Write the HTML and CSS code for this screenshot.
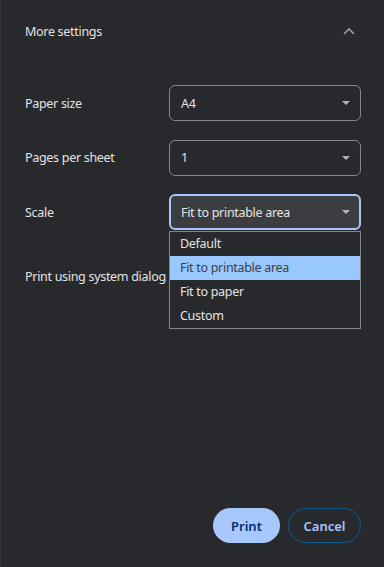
FILE: index.html
```html
<!DOCTYPE html>
<html lang="en">
  <head>
    <meta charset="UTF-8" />
    <meta name="viewport" content="width=device-width, initial-scale=1.0" />
    <title>Print</title>
    <link rel="stylesheet" href="styles.css">
  </head>
  <body>
    <div class="sidebar">
      <div class="section-header">
        <span>More settings</span>
        <svg class="chevron" width="12" height="8" viewBox="0 0 12 8">
          <path d="M1 7 L6 2 L11 7" fill="none" stroke="#9aa0a6" stroke-width="1.6" />
        </svg>
      </div>

      <div class="settings">
        <div class="row">
          <span class="label">Paper size</span>
          <div class="select">
            <span>A4</span>
            <span class="arrow"></span>
          </div>
        </div>
        <div class="row">
          <span class="label">Pages per sheet</span>
          <div class="select">
            <span>1</span>
            <span class="arrow"></span>
          </div>
        </div>
        <div class="row">
          <span class="label">Scale</span>
          <div class="select open">
            <span>Fit to printable area</span>
            <span class="arrow"></span>
            <ul class="options">
              <li>Default</li>
              <li class="selected">Fit to printable area</li>
              <li>Fit to paper</li>
              <li>Custom</li>
            </ul>
          </div>
        </div>
        <div class="row link-row">
          <span class="label clipped">Print using system dialog… (Ctrl+Shift+P)</span>
        </div>
      </div>

      <div class="buttons">
        <button class="btn primary">Print</button>
        <button class="btn outline">Cancel</button>
      </div>
    </div>
  </body>
</html>
```

FILE: styles.css
```css
* {
  margin: 0;
  padding: 0;
  box-sizing: border-box;
}

body {
  background: #28292d;
  color: #e3e3e3;
  font-family: "Noto Sans", "Open Sans", Arial, sans-serif;
  font-size: 12.5px;
  letter-spacing: -0.3px;
}

.sidebar {
  min-height: 100vh;
  border-left: 1px solid #35363a;
  padding: 0 23px 24px 24px;
  display: flex;
  flex-direction: column;
}

.section-header {
  height: 62px;
  display: flex;
  align-items: center;
  justify-content: space-between;
  padding-right: 6px;
}

.settings {
  margin-top: 23px;
  display: flex;
  flex-direction: column;
  gap: 18.5px;
}

.row {
  height: 36px;
  display: flex;
  align-items: center;
  justify-content: space-between;
  white-space: nowrap;
}

.link-row {
  margin-top: 10px;
}

.clipped {
  width: 142px;
  overflow: hidden;
}

.select {
  position: relative;
  width: 192px;
  height: 36px;
  border: 1px solid #80868b;
  border-radius: 6px;
  display: flex;
  align-items: center;
  justify-content: space-between;
  padding: 0 10px 0 11px;
  flex-shrink: 0;
}

.select.open {
  border: 2px solid #a8c7fa;
  background: #3c3d41;
  padding: 0 9px 0 10px;
  z-index: 2;
}

.arrow {
  width: 0;
  height: 0;
  border-left: 4px solid transparent;
  border-right: 4px solid transparent;
  border-top: 4px solid #b0b3b8;
}

.options {
  list-style: none;
  position: absolute;
  top: 35px;
  left: -2px;
  width: 192px;
  background: #28292d;
  border: 1px solid #80868b;
}

.options li {
  height: 24px;
  line-height: 24px;
  padding-left: 10px;
  color: #e3e3e3;
}

.options li.selected {
  background: #99c8ff;
  color: #3c4043;
}

.buttons {
  margin-top: auto;
  display: flex;
  justify-content: flex-end;
  gap: 8px;
}

.btn {
  height: 35px;
  border-radius: 18px;
  font-family: inherit;
  font-size: 13px;
  font-weight: 600;
  letter-spacing: 0;
}

.primary {
  width: 67px;
  background: #a8c7fa;
  color: #062e6f;
  border: none;
}

.outline {
  width: 73px;
  background: transparent;
  color: #a8c7fa;
  border: 1px solid #0b5b8a;
}
```
